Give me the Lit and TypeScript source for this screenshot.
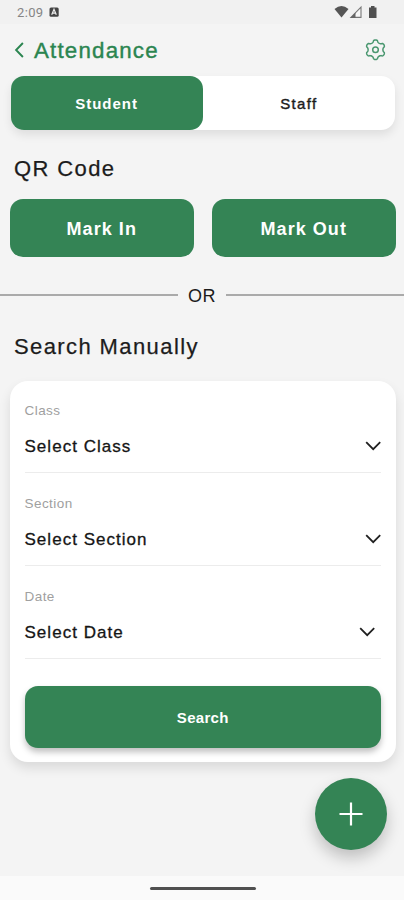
import { LitElement, html, css } from "lit";
import { customElement, property } from "lit/decorators.js";

@customElement("select-field")
class SelectField extends LitElement {
  @property() label = "";
  @property() value = "";
  @property({ type: Boolean }) inset = false;

  static styles = css`
    :host { display: block; height: 93px; box-sizing: border-box; }
    .label { height: 18px; line-height: 18px; font-size: 13.5px; letter-spacing: 0.45px; color: #a0a0a0; }
    .row { display: flex; align-items: center; justify-content: space-between; height: 34px; margin-top: 10px; padding-bottom: 8px; border-bottom: 1.5px solid #ececec; }
    .value { font-size: 17px; letter-spacing: 1.03px; color: #151515; -webkit-text-stroke: 0.3px #151515; }
    .chevron { display: block; width: 16px; height: 10px; margin-bottom: 3px; }
    .chevron.inset { margin-right: 6.5px; }
  `;

  render() {
    return html`
      <div class="label">${this.label}</div>
      <div class="row">
        <span class="value">${this.value}</span>
        <svg class="chevron ${this.inset ? "inset" : ""}" viewBox="0 0 16 10" fill="none" stroke="#202020" stroke-width="1.8">
          <path d="M1.2 1.2 L8.2 8.2 L15.2 1.2" />
        </svg>
      </div>
    `;
  }
}

// Six rounded teeth around the hub, the first one pointing up.
const gearPath = (() => {
  const points: string[] = [];
  for (let deg = 0; deg < 360; deg += 4) {
    const a = (deg * Math.PI) / 180;
    const wave = Math.cos(6 * a);
    const r = 8.6 + 1.2 * Math.sign(wave) * Math.pow(Math.abs(wave), 0.5);
    points.push(`${(10.5 + r * Math.sin(a)).toFixed(2)} ${(10.7 - r * Math.cos(a)).toFixed(2)}`);
  }
  return `M${points.join("L")}Z`;
})();

@customElement("app-root")
class AppRoot extends LitElement {
  static styles = css`
    :host { display: block; height: 900px; overflow: hidden; font-family: "Liberation Sans", Arial, sans-serif; color: #1c1c1c; background: #f4f4f4; }
    .screen { display: flex; flex-direction: column; height: 900px; position: relative; }
    .status { display: flex; align-items: center; height: 24px; background: #f1f1f1; padding: 0 25px 0 17px; box-sizing: border-box; }
    .clock { font-family: Roboto, sans-serif; font-size: 13px; letter-spacing: 0.35px; color: #858585; width: 32px; line-height: 24px; padding-top: 1px; }
    .status svg { display: block; }
    .signals { margin-left: auto; }
    header { display: flex; align-items: center; height: 52px; padding: 0 18px 0 14px; box-sizing: border-box; color: #2b8550; }
    .title { font-size: 22.3px; font-weight: 400; letter-spacing: 1.2px; margin: 0 0 0 9px; -webkit-text-stroke: 0.4px #2b8550; line-height: 52px; padding-top: 2px; }
    .gear { margin-left: auto; margin-top: -1px; }
    .tabs { display: flex; height: 54px; margin: 0 9px 0 10.5px; border-radius: 14px; background: #fff; box-shadow: 0 5px 10px rgba(0, 0, 0, 0.09); flex: none; }
    .tab { flex: 1; display: flex; align-items: center; justify-content: center; font-size: 15px; letter-spacing: 1px; padding-top: 1px; box-sizing: border-box; }
    .tab.plain { letter-spacing: 1.35px; -webkit-text-stroke: 0.4px #1c1c1c; }
    .tab.active { background: #348455; color: #fff; font-weight: 700; border-radius: 13px; }
    h2 { font-size: 22px; font-weight: 400; letter-spacing: 1.4px; margin: 0 0 0 14px; -webkit-text-stroke: 0.25px #1c1c1c; line-height: 30px; }
    .qr { margin-top: 24px; }
    .actions { display: flex; gap: 17.5px; height: 58px; margin: 15px 8px 0 9.5px; flex: none; }
    .action { flex: 1; display: flex; align-items: center; justify-content: center; border-radius: 13px; background: #348455; color: #fff; font-size: 18px; font-weight: 700; letter-spacing: 1.05px; padding-top: 2px; box-sizing: border-box; }
    .divider { display: flex; align-items: center; gap: 10px; height: 20px; margin-top: 28px; font-size: 18px; letter-spacing: 0.6px; }
    .divider .word { padding-top: 2px; }
    .rule { flex: 1; height: 2px; background: #aaa; }
    .manual { margin-top: 27px; }
    .card { margin: 19.4px 8px 0 9.5px; height: 381px; padding: 21px 15px 0; border-radius: 18px; background: #fff; box-shadow: 0 6px 12px rgba(0, 0, 0, 0.11); box-sizing: border-box; flex: none; }
    .search { display: flex; align-items: center; justify-content: center; height: 62px; margin-top: 4.6px; padding-top: 2px; box-sizing: border-box; border-radius: 13px; background: #348455; color: #fff; font-size: 15px; font-weight: 700; letter-spacing: 0.3px; box-shadow: 0 4px 6px rgba(0, 0, 0, 0.25); }
    .fab { position: absolute; right: 17px; bottom: 50px; width: 72px; height: 72px; border-radius: 50%; background: #348455; display: flex; align-items: center; justify-content: center; box-shadow: 0 8px 16px rgba(0, 0, 0, 0.22); }
    .nav { height: 24px; margin-top: auto; background: #fafafa; display: flex; align-items: center; justify-content: center; }
    .handle { width: 106px; height: 3px; border-radius: 2px; background: #505050; margin-top: 1px; margin-left: 2px; }
  `;

  render() {
    return html`
      <div class="screen">
        <div class="status">
          <span class="clock">2:09</span>
          <svg width="10" height="10" viewBox="0 0 10 10">
            <rect x=".5" y=".5" width="9.2" height="9.2" rx="1.5" fill="#444" />
            <path d="M2.7 7.8 L5 2.3 L7.3 7.8 M3.5 6.2 H6.5" fill="none" stroke="#eee" stroke-width="1.2" />
          </svg>
          <svg class="signals" width="45" height="14" viewBox="0 0 45 14">
            <path d="M.5 4 Q7.5 -1.8 14.5 4 L7.5 12.5z" fill="#555" />
            <path d="M27 2 V12.4 H16.9z" fill="#f7f7f7" stroke="#777" stroke-width="1.1" />
            <path d="M21.5 7.6 V12.9 H16.3z" fill="#666" />
            <path d="M35 2.5h2V1h3.5v1.5h2V13H35z" fill="#505050" />
          </svg>
        </div>
        <header>
          <svg width="11" height="16" viewBox="0 0 11 16" fill="none" stroke="#2b8550" stroke-width="1.9">
            <path d="M8.9 1 L2.1 8 L8.9 15" />
          </svg>
          <h1 class="title">Attendance</h1>
          <svg class="gear" width="21" height="22" viewBox="0 0 21 22" fill="none" stroke="#4a9770" stroke-width="1.5" stroke-linejoin="round">
            <path d=${gearPath} />
            <circle cx="10.5" cy="10.7" r="2.8" />
          </svg>
        </header>
        <div class="tabs">
          <div class="tab active">Student</div>
          <div class="tab plain">Staff</div>
        </div>
        <h2 class="qr">QR Code</h2>
        <div class="actions">
          <div class="action">Mark In</div>
          <div class="action">Mark Out</div>
        </div>
        <div class="divider"><span class="rule"></span><span class="word">OR</span><span class="rule"></span></div>
        <h2 class="manual">Search Manually</h2>
        <div class="card">
          <select-field label="Class" value="Select Class"></select-field>
          <select-field label="Section" value="Select Section"></select-field>
          <select-field label="Date" value="Select Date" inset></select-field>
          <div class="search">Search</div>
        </div>
        <div class="nav"><span class="handle"></span></div>
        <div class="fab">
          <svg width="24" height="24" viewBox="0 0 24 24" stroke="#fff" stroke-width="2.2"><path d="M12 .5 V23.5 M.5 12 H23.5" /></svg>
        </div>
      </div>
    `;
  }
}
